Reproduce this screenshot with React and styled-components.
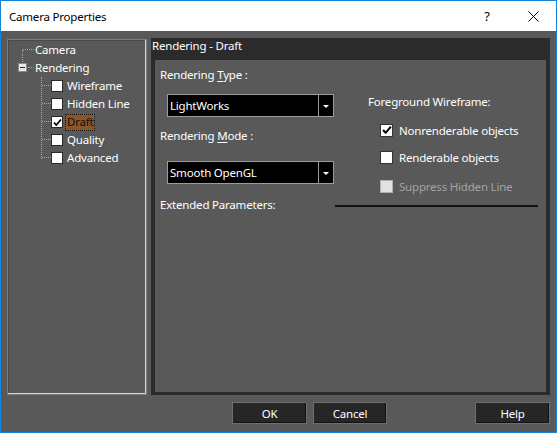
import React from "react";
import styled, { createGlobalStyle } from "styled-components";

const Global = createGlobalStyle`
  html, body { margin: 0; padding: 0; background: #ffffff; }
  * { box-sizing: border-box; }
`;

const FONT = `"Noto Sans", "Open Sans", sans-serif`;

const Window = styled.div`
  width: 557px;
  height: 433px;
  border: 1px solid #1883d7;
  display: flex;
  flex-direction: column;
  font-family: ${FONT};
  font-size: 11.5px;
  letter-spacing: -0.2px;
  overflow: hidden;
`;

const TitleBar = styled.div`
  height: 30px;
  background: #ffffff;
  display: flex;
  align-items: center;
  padding-left: 8px;
  color: #000;
`;

const TitleText = styled.div`
  flex: 1;
  font-size: 11.5px;
`;

const TitleButton = styled.div`
  width: 46px;
  height: 30px;
  display: flex;
  align-items: center;
  justify-content: center;
  font-size: 13px;
  color: #000;
`;

const Body = styled.div`
  flex: 1;
  background: #595959;
  display: flex;
  flex-direction: column;
  padding: 7px 5px 0 6px;
`;

const Main = styled.div`
  display: flex;
  height: 357px;
  gap: 4px;
`;

const Tree = styled.div`
  width: 140px;
  margin-top: 1px;
  border: 1px solid #7c7c7c;
  box-shadow: inset -1px -1px 0 #d4d4d4, inset 1px 1px 0 #4a4a4a;
  padding: 1px 0 0 0;
  color: #ffffff;
  position: relative;
`;

const Row = styled.div`
  height: 18px;
  display: flex;
  align-items: center;
  position: relative;
`;

const RootLabel = styled.span`
  position: absolute;
  left: 27px;
  top: 0;
  line-height: 18px;
`;

const ChildLabel = styled.span`
  position: absolute;
  left: 57px;
  top: 1px;
  height: 17px;
  line-height: 16px;
  padding: 0 2px;
  color: ${(p) => (p.$selected ? "#111" : "#fff")};
  background: ${(p) => (p.$selected ? "#8c5526" : "transparent")};
  outline: ${(p) => (p.$selected ? "1px dotted #111" : "none")};
  outline-offset: -1px;
`;

const DotH = styled.div`
  position: absolute;
  left: ${(p) => p.$x}px;
  width: ${(p) => p.$w}px;
  top: 8px;
  border-top: 1px dotted #a8a8a8;
`;

const DotV = styled.div`
  position: absolute;
  left: ${(p) => p.$x}px;
  top: ${(p) => p.$y}px;
  height: ${(p) => p.$h}px;
  border-left: 1px dotted #a8a8a8;
`;

const Expander = styled.div`
  position: absolute;
  left: 10px;
  top: 4px;
  width: 9px;
  height: 9px;
  background: #e8e8e8;
  border: 1px solid #8a8a8a;
  display: flex;
  align-items: center;
  justify-content: center;
  &::after {
    content: "";
    width: 5px;
    height: 1px;
    background: #222;
  }
`;

const TreeBox = styled.div`
  position: absolute;
  left: 43px;
  top: 3px;
  width: 12px;
  height: 12px;
  background: #fff;
  border: 1px solid #2a2a2a;
  display: flex;
  align-items: center;
  justify-content: center;
`;

const Panel = styled.div`
  width: 399px;
  background: #2b2b2b;
  display: flex;
  flex-direction: column;
  padding: 0 4px 3px 4px;
`;

const PanelHeader = styled.div`
  height: 22px;
  line-height: 16px;
  color: #fff;
  margin-left: -3px;
`;

const Inner = styled.div`
  flex: 1;
  background: #595959;
  color: #fff;
  padding: 7px 8px 0 5px;
  display: flex;
  flex-direction: column;
`;

const Columns = styled.div`
  display: flex;
  align-items: flex-start;
`;

const LeftCol = styled.div`
  width: 174px;
  display: flex;
  flex-direction: column;
`;

const RightCol = styled.div`
  margin-left: 34px;
  padding-top: 27px;
  display: flex;
  flex-direction: column;
`;

const Label = styled.div`
  height: 16px;
  line-height: 16px;
  margin-top: ${(p) => p.$mt || 0}px;
`;

const U = styled.span`
  text-decoration: underline;
  text-underline-offset: 2px;
`;

const Combo = styled.div`
  margin-top: ${(p) => p.$mt}px;
  margin-left: 7px;
  width: 167px;
  height: 23px;
  display: flex;
`;

const ComboText = styled.div`
  flex: 1;
  background: #000;
  border: 1px solid #9c9c9c;
  border-right: none;
  color: #fff;
  line-height: 21px;
  padding-left: 2px;
`;

const ComboButton = styled.div`
  width: 16px;
  background: #000;
  border: 1px solid #9c9c9c;
  display: flex;
  justify-content: center;
  padding-top: 10px;
`;

const Arrow = styled.div`
  width: 0;
  height: 0;
  border-left: 3px solid transparent;
  border-right: 3px solid transparent;
  border-top: 3px solid #fff;
`;

const CheckRow = styled.label`
  display: flex;
  align-items: center;
  height: 16px;
  margin-top: ${(p) => p.$mt}px;
  margin-left: 12px;
  color: ${(p) => (p.$disabled ? "#a3a3a3" : "#fff")};
`;

const Box = styled.span`
  width: 13px;
  height: 13px;
  margin-right: 6px;
  background: ${(p) => (p.$disabled ? "#e2e2e2" : "#fff")};
  border: 1px solid ${(p) => (p.$disabled ? "#b0b0b0" : "#333")};
  display: flex;
  align-items: center;
  justify-content: center;
`;

const ExtRow = styled.div`
  display: flex;
  align-items: center;
  margin-top: 2px;
  height: 16px;
`;

const Rule = styled.div`
  margin-left: auto;
  width: 203px;
  height: 2px;
  background: #111;
  margin-top: 3px;
`;

const Footer = styled.div`
  display: flex;
  justify-content: flex-end;
  gap: 6px;
  margin-top: 7px;
  padding-right: 1px;
`;

const Button = styled.div`
  width: ${(p) => p.$w || 75}px;
  height: 22px;
  background: #262626;
  border: 1px solid #6e6e6e;
  box-shadow: inset -1px -1px 0 #111;
  color: #fff;
  display: flex;
  align-items: center;
  justify-content: center;
  margin-right: ${(p) => p.$mr || 0}px;
`;

const Check = ({ size = 9 }) => (
  <svg width={size} height={size} viewBox="0 0 9 9">
    <polyline points="1,4.5 3.3,7 8,1.5" fill="none" stroke="#000" strokeWidth="1.8" />
  </svg>
);

const children = ["Wireframe", "Hidden Line", "Draft", "Quality", "Advanced"];

export default function App() {
  return (
    <>
      <Global />
      <Window>
        <TitleBar>
          <TitleText>Camera Properties</TitleText>
          <TitleButton>?</TitleButton>
          <TitleButton>
            <svg width="11" height="11" viewBox="0 0 11 11">
              <path d="M0.5 0.5 L10.5 10.5 M10.5 0.5 L0.5 10.5" stroke="#000" strokeWidth="1" />
            </svg>
          </TitleButton>
        </TitleBar>
        <Body>
          <Main>
            <Tree>
              <Row>
                <DotV $x={14} $y={9} $h={14} />
                <DotH $x={15} $w={11} />
                <RootLabel>Camera</RootLabel>
              </Row>
              <Row>
                <Expander />
                <DotH $x={20} $w={6} />
                <RootLabel>Rendering</RootLabel>
              </Row>
              <DotV $x={33} $y={37} $h={82} />
              {children.map((c) => (
                <Row key={c}>
                  <DotH $x={34} $w={9} />
                  <TreeBox>{c === "Draft" && <Check size={9} />}</TreeBox>
                  <ChildLabel $selected={c === "Draft"}>{c}</ChildLabel>
                </Row>
              ))}
            </Tree>
            <Panel>
              <PanelHeader>Rendering - Draft</PanelHeader>
              <Inner>
                <Columns>
                  <LeftCol>
                    <Label>
                      Rendering <U>T</U>ype :
                    </Label>
                    <Combo $mt={11}>
                      <ComboText>LightWorks</ComboText>
                      <ComboButton>
                        <Arrow />
                      </ComboButton>
                    </Combo>
                    <Label $mt={11}>
                      Rendering <U>M</U>ode :
                    </Label>
                    <Combo $mt={17}>
                      <ComboText>Smooth OpenGL</ComboText>
                      <ComboButton>
                        <Arrow />
                      </ComboButton>
                    </Combo>
                  </LeftCol>
                  <RightCol>
                    <Label>Foreground Wireframe:</Label>
                    <CheckRow $mt={12}>
                      <Box>
                        <Check size={10} />
                      </Box>
                      Nonrenderable objects
                    </CheckRow>
                    <CheckRow $mt={11}>
                      <Box />
                      Renderable objects
                    </CheckRow>
                    <CheckRow $mt={13} $disabled>
                      <Box $disabled />
                      Suppress Hidden Line
                    </CheckRow>
                  </RightCol>
                </Columns>
                <ExtRow>
                  Extended Parameters:
                  <Rule />
                </ExtRow>
              </Inner>
            </Panel>
          </Main>
          <Footer>
            <Button>OK</Button>
            <Button $w={74} $mr={82}>Cancel</Button>
            <Button>Help</Button>
          </Footer>
        </Body>
      </Window>
    </>
  );
}
